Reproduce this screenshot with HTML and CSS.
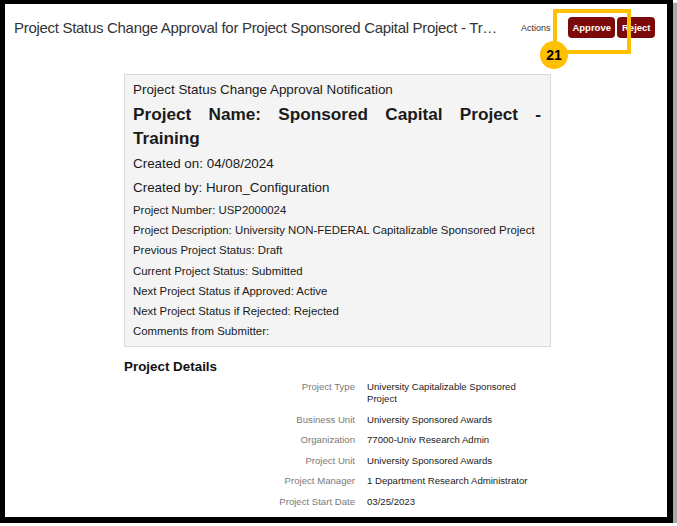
FILE: index.html
```html
<!DOCTYPE html>
<html>
<head>
<meta charset="utf-8">
<link rel="stylesheet" href="styles.css">
</head>
<body>
<div class="frame">
  <header class="topbar">
    <h1 class="title">Project Status Change Approval for Project Sponsored Capital Project - Tr…</h1>
    <div class="actions">
      <span class="actions-menu">Actions <span class="caret">▾</span></span>
      <button class="btn">Approve</button>
      <button class="btn">Reject</button>
    </div>
  </header>
  <div class="highlight"></div>
  <div class="step">21</div>

  <main class="content">
    <section class="notice">
      <p class="notice-head">Project Status Change Approval Notification</p>
      <p class="notice-name">Project Name: Sponsored Capital Project - Training</p>
      <p class="notice-med">Created on: 04/08/2024</p>
      <p class="notice-med">Created by: Huron_Configuration</p>
      <p class="notice-sm">Project Number: USP2000024</p>
      <p class="notice-sm">Project Description: University NON-FEDERAL Capitalizable Sponsored Project</p>
      <p class="notice-sm">Previous Project Status: Draft</p>
      <p class="notice-sm">Current Project Status: Submitted</p>
      <p class="notice-sm">Next Project Status if Approved: Active</p>
      <p class="notice-sm">Next Project Status if Rejected: Rejected</p>
      <p class="notice-sm">Comments from Submitter:</p>
    </section>

    <h2 class="details-title">Project Details</h2>
    <dl class="details">
      <dt>Project Type</dt><dd>University Capitalizable Sponsored Project</dd>
      <dt>Business Unit</dt><dd>University Sponsored Awards</dd>
      <dt>Organization</dt><dd>77000-Univ Research Admin</dd>
      <dt>Project Unit</dt><dd>University Sponsored Awards</dd>
      <dt>Project Manager</dt><dd>1 Department Research Administrator</dd>
      <dt>Project Start Date</dt><dd>03/25/2023</dd>
    </dl>
  </main>
</div>
</body>
</html>
```
FILE: styles.css
```css
* { box-sizing: border-box; }
html, body { margin: 0; padding: 0; background: #fff; }
body { font-family: "Liberation Sans", Arial, sans-serif; color: #222; }

.frame {
  position: relative;
  width: 673px;
  height: 523px;
  border-style: solid;
  border-color: #000;
  border-width: 4px 6px 6px 5px;
  box-shadow: 4px 3px 1px #a8a8a8;
  overflow: hidden;
  background: #fff;
}

.topbar {
  display: flex;
  align-items: center;
  padding: 13px 12px 0 9px;
}
.title {
  flex: 0 0 auto;
  margin: 0;
  font-size: 15px;
  letter-spacing: -0.3px;
  font-weight: normal;
  color: #333;
  line-height: 21px;
  white-space: nowrap;
}
.actions {
  display: flex;
  align-items: center;
  margin-left: auto;
}
.actions-menu {
  font-size: 9px;
  color: #333;
  margin-right: 9px;
  white-space: nowrap;
}
.caret { font-size: 7px; color: #666; }
.btn {
  font-family: "Liberation Sans", Arial, sans-serif;
  background: #7c0a0a;
  color: #fff;
  font-weight: bold;
  font-size: 9.5px;
  border: none;
  border-radius: 4px;
  height: 21px;
  padding: 0 4.5px;
  margin-left: 2px;
}

.highlight {
  position: absolute;
  left: 548px;
  top: 5px;
  width: 78px;
  height: 45px;
  border: 4px solid #ffc000;
}
.step {
  position: absolute;
  left: 535px;
  top: 37px;
  width: 28px;
  height: 28px;
  border-radius: 50%;
  background: #ffc000;
  color: #000;
  font-weight: bold;
  font-size: 14px;
  line-height: 28px;
  text-align: center;
}

.content { padding: 36px 0 0 119px; }

.notice {
  width: 427px;
  background: #f4f4f4;
  border: 1px solid #dadada;
  padding: 5px 9px 5px 8px;
}
.notice p { margin: 0; color: #1a1a1a; }
.notice-head { font-size: 13.4px; line-height: 20px; }
.notice-name {
  font-size: 17.2px;
  font-weight: bold;
  line-height: 24px;
  margin-top: 2px !important;
  text-align: justify;
}
.notice-med { font-size: 13.4px; line-height: 20px; margin-top: 4px !important; }
.notice-sm { font-size: 11.4px; line-height: 20.2px; }
.notice-med + .notice-sm { margin-top: 2px !important; }

.details-title {
  margin: 10px 0 0;
  font-size: 13.4px;
  line-height: 20px;
  font-weight: bold;
  color: #111;
}
.details {
  display: grid;
  grid-template-columns: 231px 165px;
  column-gap: 12px;
  row-gap: 8.5px;
  margin: 4px 0 0;
  font-size: 9.6px;
  line-height: 12px;
}
.details dt { text-align: right; color: #7a7a7a; }
.details dd { margin: 0; color: #222; }
```
